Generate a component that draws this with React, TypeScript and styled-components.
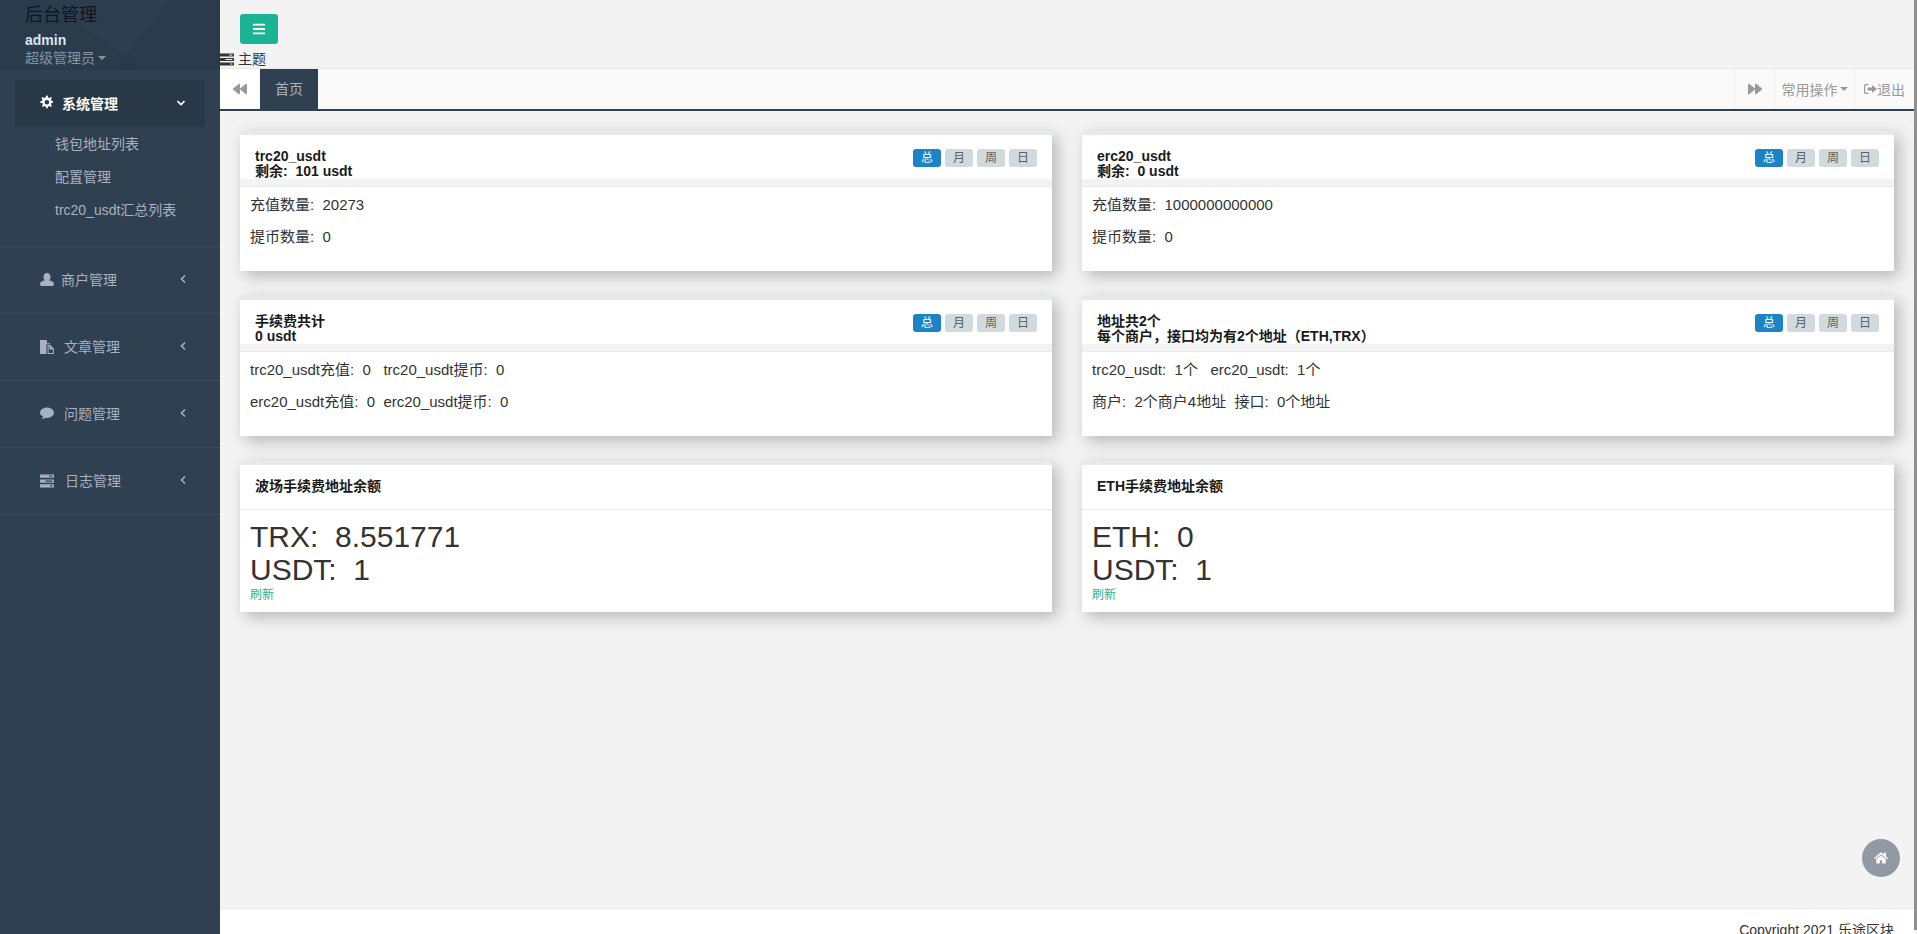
import styled, { createGlobalStyle } from 'styled-components';
import { FaBackward, FaBars, FaForward, FaHome } from 'react-icons/fa';

const FONT = '"Liberation Sans", "Noto Sans CJK SC", sans-serif';

const GlobalStyle = createGlobalStyle`
  html, body {
    margin: 0;
    height: 934px;
    overflow: hidden;
    background: #f3f3f4;
    font-family: ${FONT};
    font-size: 14px;
    color: #333;
  }
`;

const Page = styled.div`
  display: grid;
  grid-template-columns: 220px 1694px;
  height: 934px;
  overflow: hidden;
`;

/* sidebar */
const Sidebar = styled.aside`
  background: #2f4050;
  color: #a7b1c2;
`;

const Profile = styled.div`
  height: 70px;
  box-sizing: border-box;
  padding-left: 25px;
  background:
    linear-gradient(128deg, rgba(255, 255, 255, 0.012) 0 62%, transparent 62%),
    linear-gradient(35deg, rgba(0, 0, 0, 0.04) 0 45%, transparent 45%),
    #2a3b4c;
`;

const Brand = styled.div`
  font-size: 18px;
  line-height: 30px;
  color: #0d1620;
`;

const UserName = styled.div`
  font-weight: bold;
  line-height: 20px;
  color: #dfe4ed;
`;

const UserRole = styled.div`
  display: flex;
  align-items: center;
  gap: 3px;
  line-height: 16px;
  color: #8095a8;
`;

const Caret = styled.i<{ $color: string }>`
  width: 0;
  height: 0;
  border-top: 4px solid ${(p) => p.$color};
  border-left: 4px solid transparent;
  border-right: 4px solid transparent;
`;

const OpenGroup = styled.div`
  padding: 10px 0 19px;
  height: 177px;
  box-sizing: border-box;
  border-bottom: 1px solid #3a4b5b;
`;

const OpenHead = styled.div`
  display: flex;
  align-items: center;
  height: 47px;
  box-sizing: border-box;
  margin: 0 15px;
  padding: 0 20px 2px 25px;
  background: #293846;
  color: #fff;
  font-weight: bold;
`;

const SubList = styled.div`
  padding-top: 1px;
`;

const SubItem = styled.div`
  height: 33px;
  line-height: 33px;
  padding-left: 55px;
`;

const NavItem = styled.div`
  display: flex;
  align-items: center;
  height: 67px;
  box-sizing: border-box;
  padding: 0 33px 2px 40px;
  border-bottom: 1px solid #3a4b5b;
`;

const NavIcon = styled.svg<{ $gap: number }>`
  width: 14px;
  height: 15px;
  margin-right: ${(p) => p.$gap}px;
  flex: none;
  fill: currentColor;
`;

const NavText = styled.span`
  flex: 1;
`;

const Chevron = styled.svg`
  width: 8px;
  height: 10px;
  fill: none;
  stroke: currentColor;
  stroke-width: 1.6;
`;

/* main column */
const Main = styled.main`
  display: flex;
  flex-direction: column;
  height: 934px;
  min-width: 0;
`;

const TopBar = styled.div`
  height: 51px;
  box-sizing: border-box;
  padding: 14px 20px 0;
`;

const MenuButton = styled.button`
  display: flex;
  align-items: center;
  justify-content: center;
  width: 38px;
  height: 30px;
  padding: 0;
  border: none;
  border-radius: 3px;
  background: #1ab394;
  color: #fff;
  font-size: 14px;
`;

const ThemeRow = styled.div`
  display: flex;
  align-items: center;
  gap: 4px;
  height: 17px;
  line-height: 17px;
  color: #333;
`;

const ThemeIcon = styled.svg`
  width: 14px;
  height: 13px;
  fill: #333;
`;

const TabBar = styled.div`
  display: flex;
  height: 40px;
  flex: none;
  border-top: 1px solid #e7eaec;
  border-bottom: 2px solid #2f4050;
  background: #fafafa;
`;

const ArrowCell = styled.div<{ $white?: boolean }>`
  display: flex;
  align-items: center;
  justify-content: center;
  width: ${(p) => (p.$white ? 39 : 40)}px;
  flex: none;
  box-sizing: border-box;
  border-left: ${(p) => (p.$white ? 'none' : '1px solid #eee')};
  background: ${(p) => (p.$white ? '#fff' : 'transparent')};
  color: #999;
  font-size: 14px;
`;

const ActiveTab = styled.div`
  width: 58px;
  margin-left: 1px;
  line-height: 40px;
  text-align: center;
  background: #2f4050;
  color: #a7b1c2;
`;

const TabSpacer = styled.div`
  flex: 1;
`;

const ToolCell = styled.div<{ $width: number }>`
  display: flex;
  align-items: center;
  justify-content: center;
  gap: 2px;
  width: ${(p) => p.$width}px;
  flex: none;
  border-left: 1px solid #eee;
  color: #999;
`;

const OutIcon = styled.svg`
  width: 13px;
  height: 12px;
  margin-right: -2px;
  fill: #999;
`;

const Content = styled.div`
  display: grid;
  grid-template-columns: 812px 812px;
  gap: 25px 30px;
  padding: 20px 20px 0;
`;

const Card = styled.section`
  background: #fff;
  border-top: 4px solid #e7eaec;
  box-shadow: 5px 5px 15px rgba(0, 0, 0, 0.25);
`;

const CardHead = styled.header`
  display: flex;
  justify-content: space-between;
  height: 44px;
  box-sizing: border-box;
  padding: 14px 15px 0;
`;

const HeadStrip = styled.div`
  height: 7px;
  background: #f3f3f4;
`;

const CardTitle = styled.h5`
  margin: 0;
  font-size: 14px;
  line-height: 15px;
  font-weight: bold;
  color: #1a1a1a;
  white-space: pre;
`;

const Badges = styled.div`
  display: flex;
  gap: 4px;
`;

const Badge = styled.span<{ $active?: boolean }>`
  width: 28px;
  height: 18px;
  line-height: 18px;
  text-align: center;
  font-size: 12px;
  border-radius: 3px;
  background: ${(p) => (p.$active ? '#1c84c6' : '#d1dade')};
  color: ${(p) => (p.$active ? '#fff' : '#5e5e5e')};
`;

const CardBody = styled.div`
  border-top: 1px solid #e7eaec;
  padding: 7px 10px 13px;
  color: #333;
`;

const Line = styled.p`
  margin: 0 0 10px;
  font-size: 15px;
  line-height: 22px;
  white-space: pre;
`;

const BalanceBody = styled.div`
  border-top: 1px solid #e7eaec;
  padding: 10px 10px 8px;
`;

const Balance = styled.div`
  font-size: 30px;
  line-height: 33px;
  color: #333;
  white-space: pre;
`;

const RefreshLink = styled.a`
  display: block;
  margin-top: 1px;
  font-size: 12px;
  line-height: 17px;
  color: #1ab394;
`;

const Footer = styled.footer`
  margin-top: auto;
  height: 26px;
  flex: none;
  box-sizing: border-box;
  padding: 10px 20px 0 0;
  background: #fff;
  border-top: 1px solid #e7eaec;
  line-height: 22px;
  text-align: right;
  color: #333;
`;

const HomeButton = styled.div`
  position: fixed;
  left: 1862px;
  top: 839px;
  display: flex;
  align-items: center;
  justify-content: center;
  width: 38px;
  height: 38px;
  border-radius: 50%;
  background: #9199a2;
  color: #fff;
  font-size: 14px;
`;

const ScrollThumb = styled.div`
  position: fixed;
  right: 0;
  top: 0;
  width: 3px;
  height: 930px;
  background: #8f8f8f;
`;

const GEAR =
  'M6.5 0h1.2l.4 1.9 1.2.5 1.6-1 1 1-1 1.6.5 1.2 1.6.4v1.6l-1.6.4-.5 1.2 1 1.6-1 1-1.6-1-1.2.5-.4 1.9H6.1l-.4-1.9-1.2-.5-1.6 1-1-1 1-1.6-.5-1.2L.4 7.4V5.8l1.6-.4.5-1.2-1-1.6 1-1 1.6 1 1.2-.5zM6.9 4.4a2.3 2.3 0 1 0 0 4.6 2.3 2.3 0 0 0 0-4.6z';
const USER =
  'M6.5 1a3.3 3.3 0 0 1 3.3 3.6c0 1.6-.8 2.8-1.3 3.3 2 .3 4.5 1 4.5 3.5 0 1.200-.7 1.600-1.600 1.600H1.600C.7 13 0 12.600 0 11.400c0-2.500 2.500-3.200 4.500-3.500-.5-.5-1.300-1.700-1.300-3.300A3.300 3.300 0 0 1 6.500 1z';
const FILES =
  'M0 1h6.500v3H9.500v1H6v9H0zM7 5.500h2.500l3.500 3.500v5H7zM8 6.700V13h4V9.800H8.800V6.700z';
const COMMENT =
  'M6.500 1.500c3.600 0 6.500 2.200 6.500 4.800s-2.900 4.800-6.500 4.800c-.6 0-1.200 0-1.700-.2-.9.8-2.100 1.300-3.300 1.500.7-.7 1.200-1.600 1.300-2.500C1.100 9.100 0 7.800 0 6.300 0 3.700 2.900 1.500 6.500 1.500z';
const TASKS =
  'M0 1.500h13v3H0zM8.500 2.400v1.200h3V2.400zM0 6h13v3H0zM5 6.900v1.200h6.500V6.900zM0 10.500h13v3H0zM9.500 11.400v1.200h2v-1.200z';
const SIGN_OUT =
  'M4.500 1H1.800C.8 1 0 1.800 0 2.800v6.400c0 1 .8 1.800 1.800 1.800h2.700V9.800H2c-.5 0-.8-.3-.8-.8V3c0-.5.3-.8.8-.8h2.500zM8 2v2.500H3.500v3H8V10l5-4z';

const menus = [
  { label: '商户管理', path: USER, gap: 7 },
  { label: '文章管理', path: FILES, gap: 10 },
  { label: '问题管理', path: COMMENT, gap: 10 },
  { label: '日志管理', path: TASKS, gap: 11 },
];

function RangeBadges(): JSX.Element {
  return (
    <Badges>
      <Badge $active>总</Badge>
      <Badge>月</Badge>
      <Badge>周</Badge>
      <Badge>日</Badge>
    </Badges>
  );
}

function StatCard({
  title,
  sub,
  lines,
}: {
  title: string;
  sub: string;
  lines: string[];
}): JSX.Element {
  return (
    <Card>
      <CardHead>
        <CardTitle>
          {title}
          <br />
          {sub}
        </CardTitle>
        <RangeBadges />
      </CardHead>
      <HeadStrip />
      <CardBody>
        {lines.map((line) => (
          <Line key={line}>{line}</Line>
        ))}
      </CardBody>
    </Card>
  );
}

function BalanceCard({
  title,
  rows,
}: {
  title: string;
  rows: string[];
}): JSX.Element {
  return (
    <Card>
      <CardHead>
        <CardTitle>{title}</CardTitle>
      </CardHead>
      <BalanceBody>
        {rows.map((row) => (
          <Balance key={row}>{row}</Balance>
        ))}
        <RefreshLink>刷新</RefreshLink>
      </BalanceBody>
    </Card>
  );
}

export default function App(): JSX.Element {
  return (
    <Page>
      <GlobalStyle />
      <Sidebar>
        <Profile>
          <Brand>后台管理</Brand>
          <UserName>admin</UserName>
          <UserRole>
            超级管理员
            <Caret $color="#8095a8" />
          </UserRole>
        </Profile>
        <OpenGroup>
          <OpenHead>
            <NavIcon viewBox="0 0 14 14" $gap={8}>
              <path fillRule="evenodd" d={GEAR} />
            </NavIcon>
            <NavText>系统管理</NavText>
            <Chevron viewBox="0 0 8 10">
              <path d="M0.500 3l3.500 3.500L7.500 3" />
            </Chevron>
          </OpenHead>
          <SubList>
            <SubItem>钱包地址列表</SubItem>
            <SubItem>配置管理</SubItem>
            <SubItem>trc20_usdt汇总列表</SubItem>
          </SubList>
        </OpenGroup>
        {menus.map((menu) => (
          <NavItem key={menu.label}>
            <NavIcon viewBox="0 0 13 14" $gap={menu.gap}>
              <path fillRule="evenodd" d={menu.path} />
            </NavIcon>
            <NavText>{menu.label}</NavText>
            <Chevron viewBox="0 0 8 10">
              <path d="M6 1.500L2.500 5 6 8.500" />
            </Chevron>
          </NavItem>
        ))}
      </Sidebar>

      <Main>
        <TopBar>
          <MenuButton>
            <FaBars />
          </MenuButton>
        </TopBar>
        <ThemeRow>
          <ThemeIcon viewBox="0 1 13 13" preserveAspectRatio="none">
            <path fillRule="evenodd" d={TASKS} />
          </ThemeIcon>
          主题
        </ThemeRow>
        <TabBar>
          <ArrowCell $white>
            <FaBackward />
          </ArrowCell>
          <ActiveTab>首页</ActiveTab>
          <TabSpacer />
          <ArrowCell>
            <FaForward />
          </ArrowCell>
          <ToolCell $width={79}>
            常用操作
            <Caret $color="#999" />
          </ToolCell>
          <ToolCell $width={59}>
            <OutIcon viewBox="0 0 13 12">
              <path fillRule="evenodd" d={SIGN_OUT} />
            </OutIcon>
            退出
          </ToolCell>
        </TabBar>
        <Content>
          <StatCard
            title="trc20_usdt"
            sub="剩余:  101 usdt"
            lines={['充值数量:  20273', '提币数量:  0']}
          />
          <StatCard
            title="erc20_usdt"
            sub="剩余:  0 usdt"
            lines={['充值数量:  1000000000000', '提币数量:  0']}
          />
          <StatCard
            title="手续费共计"
            sub="0 usdt"
            lines={[
              'trc20_usdt充值:  0   trc20_usdt提币:  0',
              'erc20_usdt充值:  0  erc20_usdt提币:  0',
            ]}
          />
          <StatCard
            title="地址共2个"
            sub="每个商户，接口均为有2个地址（ETH,TRX）"
            lines={[
              'trc20_usdt:  1个   erc20_usdt:  1个',
              '商户:  2个商户4地址  接口:  0个地址',
            ]}
          />
          <BalanceCard
            title="波场手续费地址余额"
            rows={['TRX:  8.551771', 'USDT:  1']}
          />
          <BalanceCard
            title="ETH手续费地址余额"
            rows={['ETH:  0', 'USDT:  1']}
          />
        </Content>
        <Footer>Copyright 2021 乐途区块</Footer>
      </Main>

      <HomeButton>
        <FaHome />
      </HomeButton>
      <ScrollThumb />
    </Page>
  );
}
